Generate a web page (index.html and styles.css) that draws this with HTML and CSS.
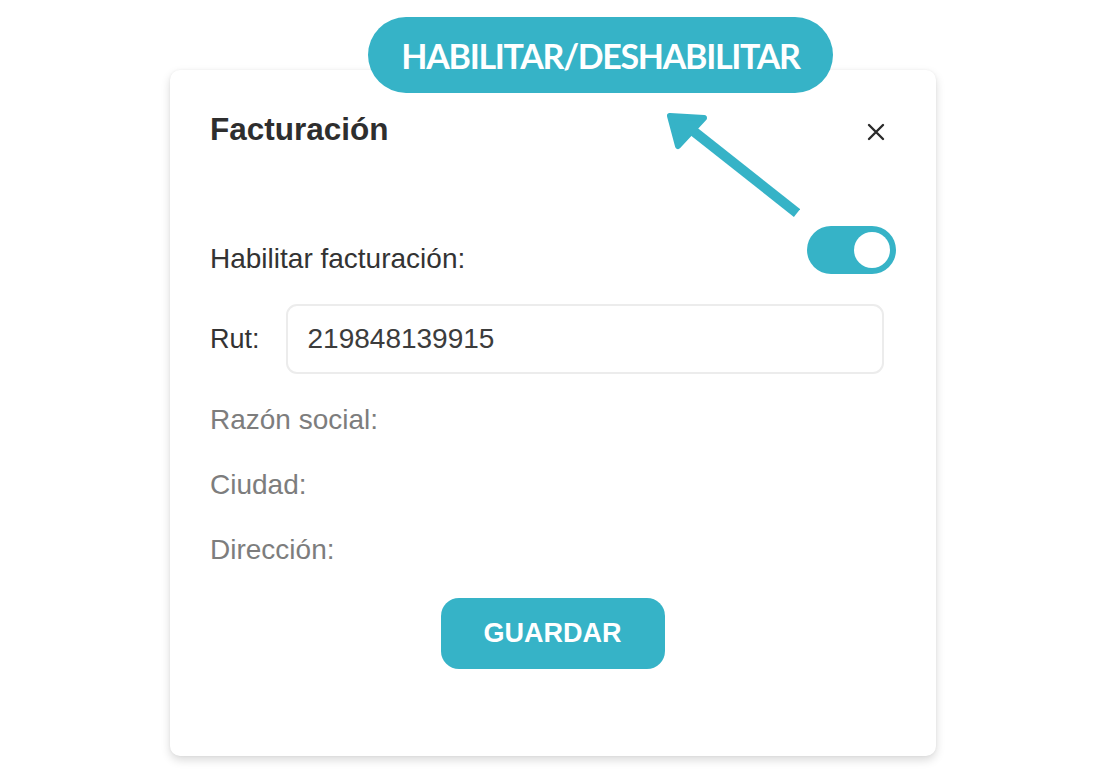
FILE: index.html
```html
<!DOCTYPE html>
<html>
<head>
    <title>Facturación</title>
    <link rel="stylesheet" href="styles.css">
</head>
<body>
    <div class="page">
        <div class="card">
            <div class="card-header">
                <h2>Facturación</h2>
                <button class="close-btn" title="Cerrar">
                    <svg width="20" height="20" viewBox="0 0 20 20">
                        <path d="M3 3 L17 17 M17 3 L3 17" stroke="#2b2b2b" stroke-width="2.4" stroke-linecap="round"/>
                    </svg>
                </button>
            </div>

            <div class="toggle-row">
                <span class="label">Habilitar facturación:</span>
                <div class="switch on"><div class="knob"></div></div>
            </div>

            <div class="input-row">
                <label class="label" for="rut">Rut:</label>
                <input id="rut" type="text" value="219848139915">
            </div>

            <div class="info-row first">Razón social:</div>
            <div class="info-row">Ciudad:</div>
            <div class="info-row">Dirección:</div>

            <div class="actions">
                <button class="primary">GUARDAR</button>
            </div>
        </div>

        <!-- annotation over the screenshot -->
        <div class="callout">HABILITAR/DESHABILITAR</div>
        <svg class="arrow" width="160" height="130" viewBox="0 0 160 130">
            <line x1="157" y1="113" x2="52" y2="30" stroke="#36b3c7" stroke-width="10"/>
            <path d="M30 16 L64 18 L38 46 Z" fill="#36b3c7" stroke="#36b3c7" stroke-width="6" stroke-linejoin="round"/>
        </svg>
    </div>
</body>
</html>
```

FILE: styles.css
```css
body {
    font-family: "Liberation Sans", Arial, sans-serif;
    margin: 0;
    background: #ffffff;
}
.page {
    position: relative;
    width: 1119px;
    height: 779px;
    padding-top: 70px;
    box-sizing: border-box;
}
.card {
    margin-left: 170px;
    width: 766px;
    height: 686px;
    box-sizing: border-box;
    padding: 41px 40px 0 40px;
    background: #fff;
    border-radius: 10px;
    box-shadow: 0 4px 10px rgba(0,0,0,0.15), 0 0 3px rgba(0,0,0,0.05);
}
.card-header {
    display: flex;
    justify-content: space-between;
    align-items: center;
    height: 36px;
}
.card-header h2 {
    margin: 0;
    font-size: 31.5px;
    line-height: 36px;
    font-weight: bold;
    color: #2e2e2e;
}
.close-btn {
    border: none;
    background: none;
    padding: 0;
    margin: 6px 10px 0 0;
    width: 20px;
    height: 20px;
    cursor: pointer;
}
.close-btn svg {
    display: block;
}
.label {
    font-size: 28px;
    line-height: 32px;
    color: #333;
}
.toggle-row {
    display: flex;
    justify-content: space-between;
    align-items: flex-start;
    margin-top: 79px;
}
.toggle-row .label {
    margin-top: 17px;
}
.switch {
    width: 89px;
    height: 48px;
    border-radius: 24px;
    background: #ccc;
    display: flex;
    align-items: center;
    padding: 0 6px;
    box-sizing: border-box;
}
.switch.on {
    background: #36b3c7;
    justify-content: flex-end;
}
.knob {
    width: 36px;
    height: 36px;
    border-radius: 50%;
    background: #fff;
}
.input-row {
    display: flex;
    align-items: center;
    margin-top: 29px;
    gap: 26px;
}
.input-row .label {
    font-size: 27px;
}
.input-row input {
    width: 598px;
    height: 70px;
    box-sizing: border-box;
    border: 2px solid #ececec;
    border-radius: 11px;
    padding: 0 20px;
    font-family: "Liberation Sans", Arial, sans-serif;
    font-size: 28px;
    color: #3c3c3c;
    outline: none;
}
.info-row {
    font-size: 28px;
    line-height: 32px;
    color: #7d7d7d;
    margin-top: 33px;
}
.info-row.first {
    margin-top: 30px;
}
.actions {
    display: flex;
    justify-content: center;
    margin-top: 32px;
    padding-right: 1px;
}
button.primary {
    width: 224px;
    height: 71px;
    border: none;
    border-radius: 18px;
    background: #36b3c7;
    color: #fff;
    font-family: "Liberation Sans", Arial, sans-serif;
    font-size: 27px;
    font-weight: bold;
    cursor: pointer;
}
.callout {
    position: absolute;
    left: 368px;
    top: 17px;
    width: 465px;
    height: 76px;
    border-radius: 38px;
    background: #36b3c7;
    color: #fff;
    display: flex;
    align-items: center;
    justify-content: center;
    font-family: Lato, "Open Sans", sans-serif;
    font-weight: 700;
    font-size: 34px;
    letter-spacing: -1.3px;
}
.arrow {
    position: absolute;
    left: 640px;
    top: 100px;
}
```
